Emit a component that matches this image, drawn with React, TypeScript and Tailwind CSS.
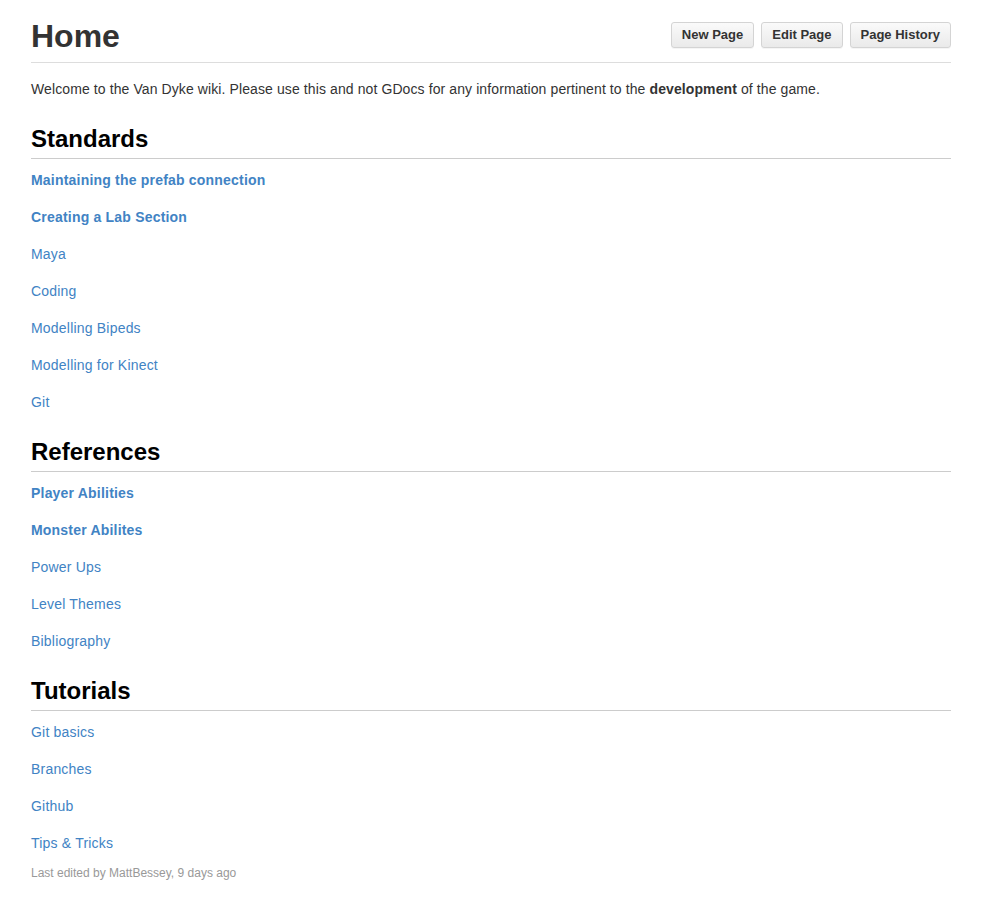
const sections = [
  {
    title: 'Standards',
    links: [
      { name: 'Maintaining the prefab connection', bold: true },
      { name: 'Creating a Lab Section', bold: true },
      { name: 'Maya' },
      { name: 'Coding' },
      { name: 'Modelling Bipeds' },
      { name: 'Modelling for Kinect' },
      { name: 'Git' },
    ],
  },
  {
    title: 'References',
    links: [
      { name: 'Player Abilities', bold: true },
      { name: 'Monster Abilites', bold: true },
      { name: 'Power Ups' },
      { name: 'Level Themes' },
      { name: 'Bibliography' },
    ],
  },
  {
    title: 'Tutorials',
    links: [
      { name: 'Git basics' },
      { name: 'Branches' },
      { name: 'Github' },
      { name: 'Tips & Tricks' },
    ],
  },
]

const actions = ['New Page', 'Edit Page', 'Page History']

export default function App() {
  return (
    <div className="min-h-screen bg-white font-['Liberation_Sans',Arial,sans-serif] text-[#333]">
      <div className="ml-[31px] w-[920px] pb-10">
        {/* Header */}
        <div className="flex items-center justify-between border-b border-[#ddd] pt-[17px] pb-[7px]">
          <h1 className="text-[32px] leading-[38px] font-bold text-[#333]">Home</h1>
          <div className="-mt-[2px] flex gap-[7px]">
            {actions.map((a) => (
              <button
                key={a}
                className="h-[26px] rounded-[3px] border border-[#d4d4d4] bg-gradient-to-b from-[#fafafa] to-[#eaeaea] px-[10px] text-[13px] font-bold text-[#333] shadow-[0_1px_0_rgba(0,0,0,0.04)]"
              >
                {a}
              </button>
            ))}
          </div>
        </div>

        <p className="mt-4 text-[14px] leading-[20px] tracking-[0.1px]">
          Welcome to the Van Dyke wiki. Please use this and not GDocs for any information pertinent to the{' '}
          <strong className="font-bold">development</strong> of the game.
        </p>

        {sections.map((s, i) => (
          <div key={s.title} className={i === 0 ? 'mt-[25px]' : 'mt-[24px]'}>
            <h2 className="border-b border-[#ccc] pb-[4px] text-[24px] leading-[30px] font-bold text-black">
              {s.title}
            </h2>
            <div className="mt-[10px] flex flex-col gap-[15px]">
              {s.links.map((l) => (
                <a
                  key={l.name}
                  href="#"
                  className={`block text-[14px] leading-[22px] tracking-[0.2px] text-[#4183c4] ${l.bold ? 'font-bold' : ''}`}
                >
                  {l.name}
                </a>
              ))}
            </div>
          </div>
        ))}

        <p className="mt-[11px] text-[12px] leading-[16px] text-[#999]">Last edited by MattBessey, 9 days ago</p>
      </div>
    </div>
  )
}
